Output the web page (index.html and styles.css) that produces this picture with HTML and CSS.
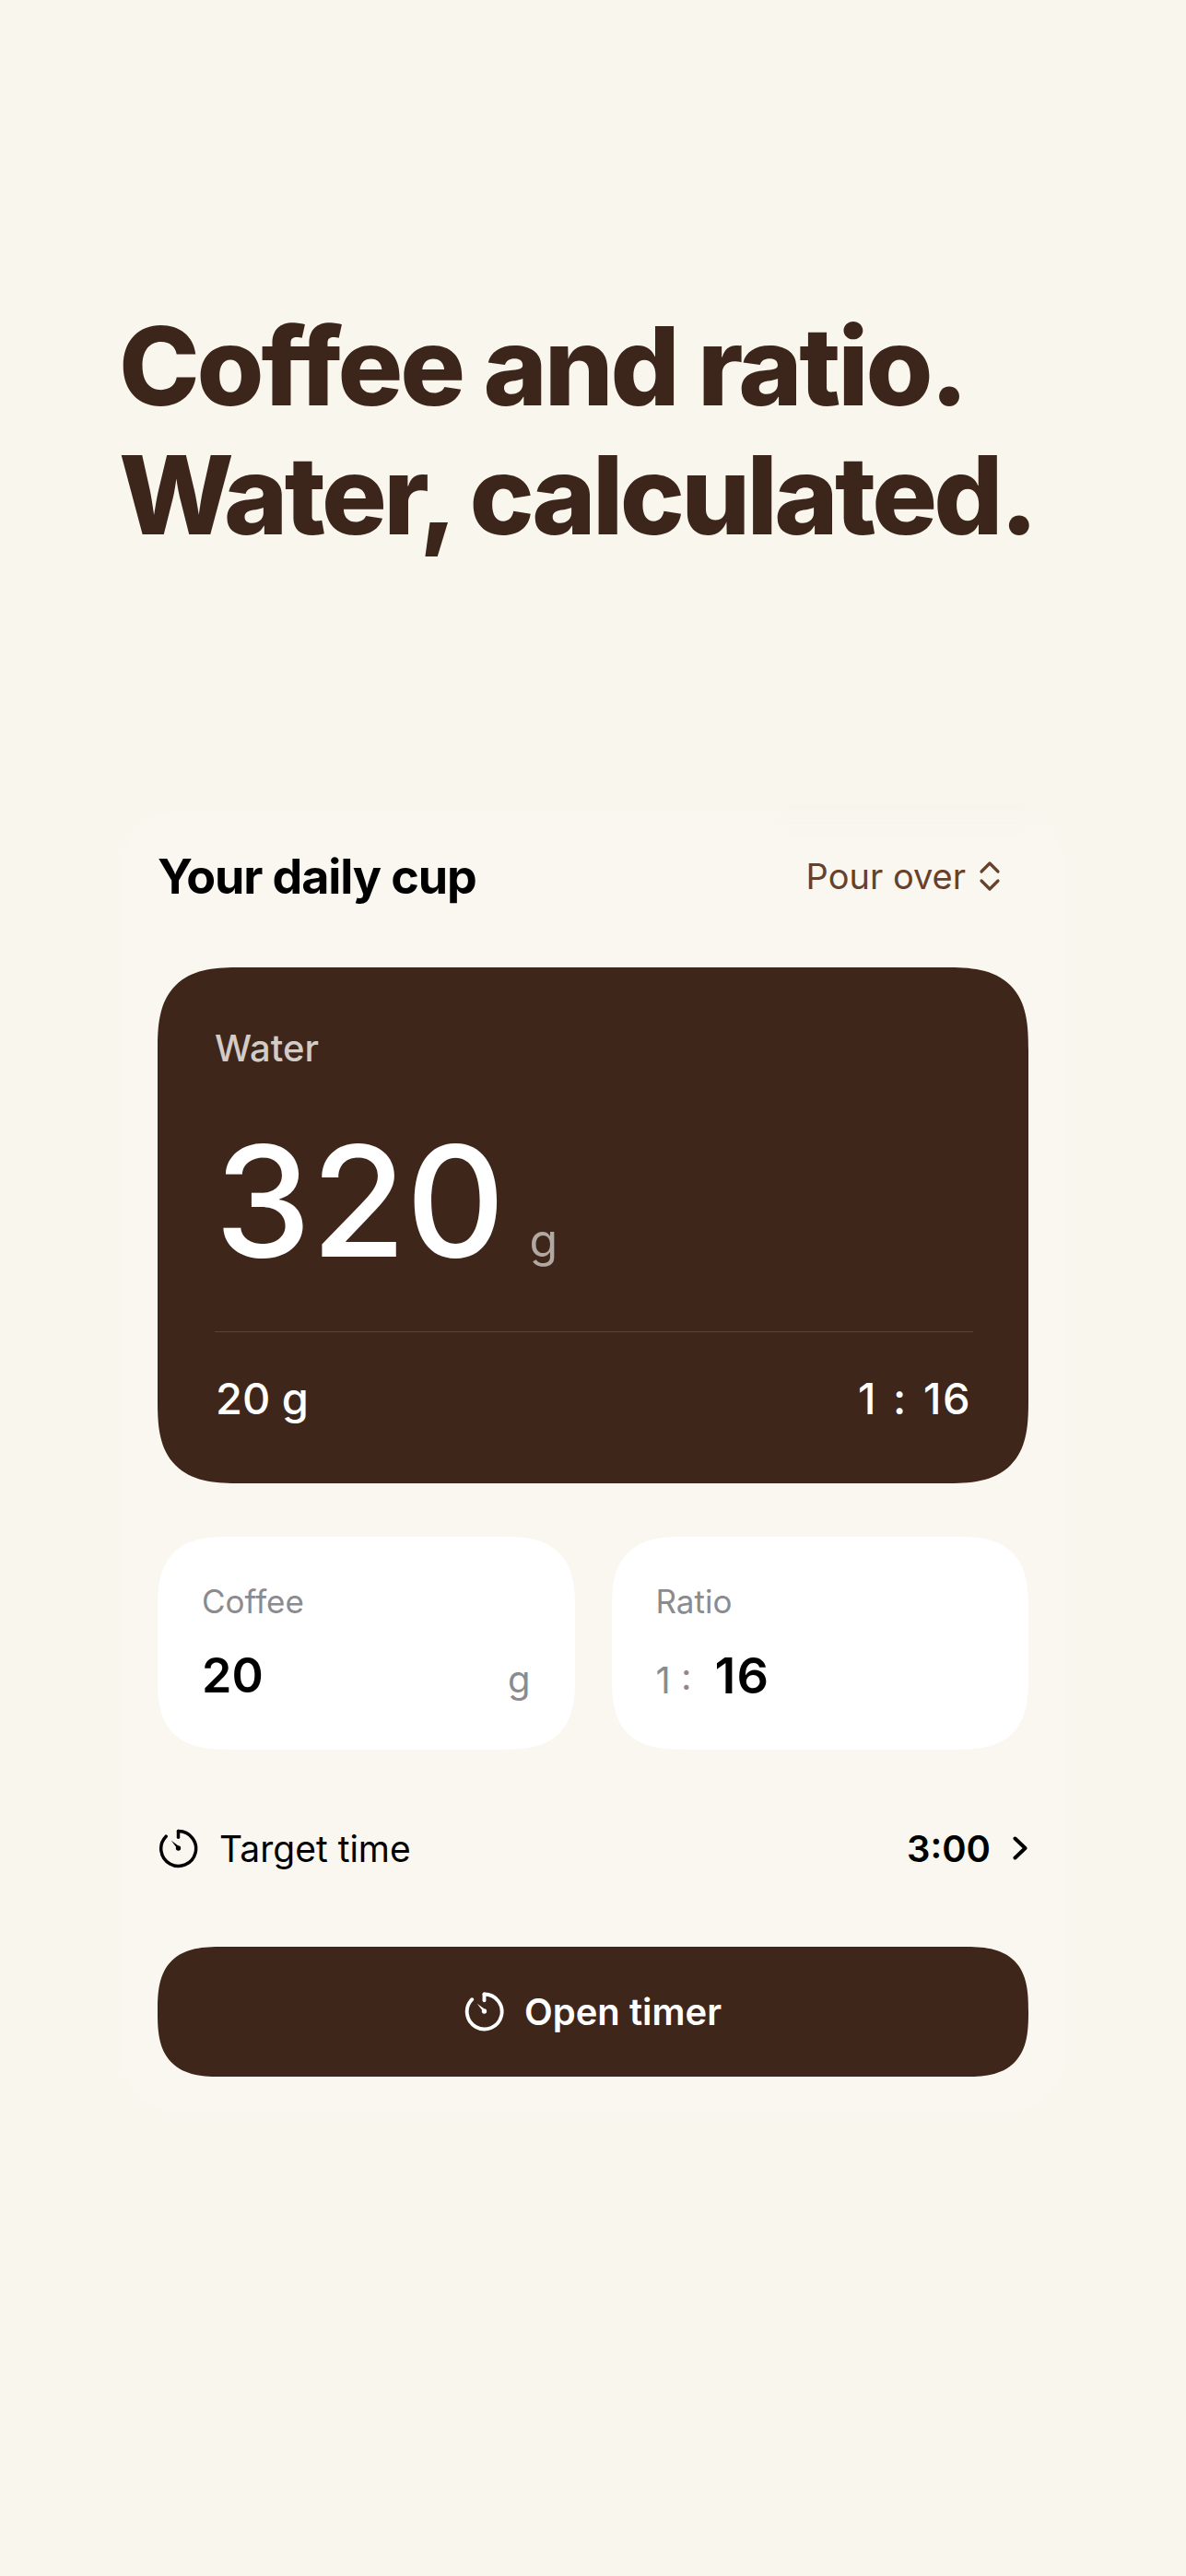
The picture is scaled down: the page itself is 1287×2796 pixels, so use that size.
FILE: index.html
```html
<!DOCTYPE html>
<html lang="en">
<head>
<meta charset="utf-8">
<title>Coffee and ratio</title>
<link rel="stylesheet" href="styles.css">
</head>
<body>
<main class="page">
  <h1 class="hero"><span class="hero-line">Coffee and ratio.</span><span class="hero-line tight">Water, calculated.</span></h1>
  <section class="panel">
    <header class="panel-head">
      <h2 class="panel-title">Your daily cup</h2>
      <div class="method">
        <span>Pour over</span>
        <svg class="updown" viewBox="0 0 24 34" fill="none" stroke="currentColor" stroke-width="3.2" stroke-linecap="round" stroke-linejoin="round"><path d="M3 12 12 3l9 9M3 22l9 9 9-9"/></svg>
      </div>
    </header>
    <div class="water">
      <div class="water-label">Water</div>
      <div class="water-value"><span class="water-num">320</span><span class="water-unit">g</span></div>
      <div class="water-foot"><span>20 g</span><span class="ratio-text">1 : 16</span></div>
    </div>
    <div class="inputs">
      <div class="input">
        <div class="input-label">Coffee</div>
        <div class="input-row"><span class="input-num">20</span><span class="input-unit">g</span></div>
      </div>
      <div class="input">
        <div class="input-label">Ratio</div>
        <div class="input-row start"><span class="input-prefix">1 :</span><span class="input-num wide">16</span></div>
      </div>
    </div>
    <div class="target">
      <div class="target-left">
        <svg class="timer" viewBox="0 0 42 42" fill="none" stroke="currentColor" stroke-width="3.4" stroke-linecap="round"><path d="M21 2.5A18.5 18.5 0 1 1 8 8"/><path d="M21 2.5V9"/><path d="M13.5 12.5 18.8 19.5 23 21.5 20.5 17.5Z" fill="currentColor" stroke="none"/><circle cx="21" cy="20.5" r="2.6" fill="currentColor" stroke="none"/></svg>
        <span>Target time</span>
      </div>
      <div class="target-right">
        <span class="target-val">3:00</span>
        <svg class="chev" viewBox="0 0 16 26" fill="none" stroke="currentColor" stroke-width="4" stroke-linecap="round" stroke-linejoin="round"><path d="M2.5 2.5l11 10.5-11 10.5"/></svg>
      </div>
    </div>
    <button class="open" type="button">
      <svg class="timer" viewBox="0 0 42 42" fill="none" stroke="currentColor" stroke-width="3.8" stroke-linecap="round"><path d="M21 2.5A18.5 18.5 0 1 1 8 8"/><path d="M21 2.5V9"/><path d="M13.5 12.5 18.8 19.5 23 21.5 20.5 17.5Z" fill="currentColor" stroke="none"/><circle cx="21" cy="20.5" r="2.6" fill="currentColor" stroke="none"/></svg>
      <span>Open timer</span>
    </button>
  </section>
</main>
</body>
</html>
```
FILE: styles.css
```css
* { box-sizing: border-box; }
html, body { margin: 0; background: #f9f6ee; }
body { font-family: Inter, "Liberation Sans", sans-serif; color: #000; }
.page { height: 2796px; padding-top: 327px; overflow: hidden; }
.hero {
  margin: 0 0 0 129px;
  font-size: 118px;
  line-height: 140px;
  font-weight: 800;
  letter-spacing: -3.2px;
  color: #3c251a;
}
.hero-line { display: block; }
.hero-line.tight { letter-spacing: -3.7px; }
.panel {
  position: relative;
  margin: 273px 130px 0 130px;
  padding: 41px 41px 40px;
  width: 1027px;
  border-radius: 70px;
  background: #faf7f0;
}
.panel::before {
  content: "";
  position: absolute;
  top: 4px;
  right: 30px;
  width: 290px;
  height: 14px;
  border-radius: 10px;
  background: #f8f5ed;
  filter: blur(6px);
}
.panel-head { display: flex; justify-content: space-between; align-items: center; height: 60px; margin-bottom: 69px; }
.panel-title { margin: 0; font-size: 52px; font-weight: 700; letter-spacing: -1.1px; }
.method { display: flex; align-items: center; gap: 14px; padding-right: 30px; font-size: 38px; color: #66412c; }
.updown { width: 24px; height: 34px; }
.water { height: 560px; padding: 65px 60px 0 62px; border-radius: 90px; corner-shape: superellipse(1.5); background: #3f261a; color: #fff; }
.water-label { font-size: 40px; line-height: 46px; font-weight: 500; color: #d3cbc6; }
.water-value { display: flex; align-items: baseline; gap: 26px; margin-top: 65px; height: 155px; }
.water-num { font-size: 167px; line-height: 155px; font-weight: 500; }
.water-unit { font-size: 50px; color: #b2a8a3; }
.water-foot { display: flex; justify-content: space-between; margin: 64px 0 0; padding: 43px 2px 0 1px; border-top: 1px solid #5a4337; font-size: 47px; line-height: 58px; font-weight: 500; }
.ratio-text { word-spacing: 3px; letter-spacing: 1.5px; }
.inputs { display: grid; grid-template-columns: 1fr 1fr; gap: 40px; margin-top: 58px; }
.input { height: 231px; padding: 48px 48px 0; border-radius: 80px; corner-shape: superellipse(1.5); background: #fff; }
.input-label { font-size: 35px; line-height: 44px; color: #8b8b8f; }
.input-row { display: flex; justify-content: space-between; align-items: baseline; margin-top: 27px; }
.input-row.start { justify-content: flex-start; gap: 25px; }
.input-num { font-size: 52px; line-height: 64px; font-weight: 600; }
.input-num.wide { font-size: 54px; letter-spacing: 1px; }
.input-unit, .input-prefix { font-size: 40px; color: #8b8b8f; }
.target { display: flex; justify-content: space-between; align-items: center; height: 68px; margin-top: 73px; }
.target-left { display: flex; align-items: center; gap: 23px; font-size: 39px; padding-left: 1px; }
.target-right { display: flex; align-items: center; gap: 24px; }
.target-val { font-size: 40px; font-weight: 600; }
.timer { width: 43px; height: 43px; flex: none; }
.chev { width: 16px; height: 26px; margin-right: 1px; }
.open {
  display: flex; align-items: center; justify-content: center; gap: 22px;
  width: 100%; height: 141px; margin-top: 73px; border: 0; border-radius: 72px; corner-shape: superellipse(1.5);
  background: #3f261a; color: #fff; font: 600 40px Inter, "Liberation Sans", sans-serif;
}
```
